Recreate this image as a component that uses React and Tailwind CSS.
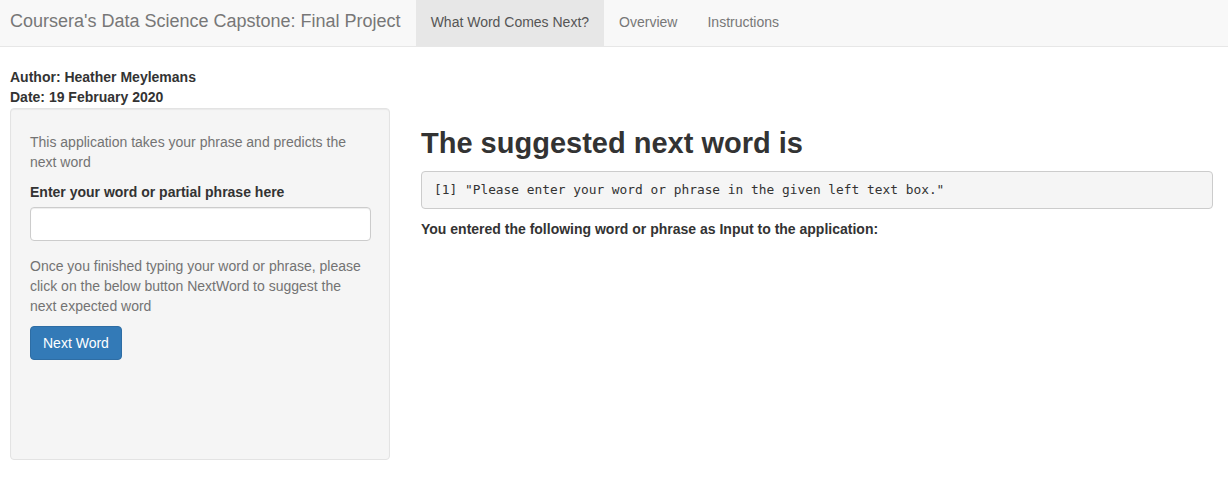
export default function App() {
  const font = { fontFamily: '"Liberation Sans", Arial, sans-serif' };
  return (
    <div className="min-h-[479px] bg-white text-[14px] leading-[20px] text-[#333]" style={font}>
      <nav className="flex h-[47px] items-stretch border-b border-[#e7e7e7] bg-[#f8f8f8]">
        <div className="flex items-center pb-[4px] pl-[10px] pr-[15px] text-[18px] text-[#777]">
          Coursera's Data Science Capstone: Final Project
        </div>
        <div className="flex items-center bg-[#e7e7e7] px-[15px] pb-[3px] text-[#555]">What Word Comes Next?</div>
        <div className="flex items-center px-[15px] pb-[3px] text-[#777]">Overview</div>
        <div className="flex items-center px-[15px] pb-[3px] text-[#777]">Instructions</div>
      </nav>
      <div className="px-[10px] pt-[20px]">
        <div className="font-bold">Author: Heather Meylemans</div>
        <div className="font-bold">Date: 19 February 2020</div>
        <div className="mt-px flex">
          <div className="w-[380px] shrink-0">
            <div className="h-[352px] rounded-[4px] border border-[#e3e3e3] bg-[#f5f5f5] px-[19px] pb-[19px] pt-[23px] shadow-[inset_0_1px_1px_rgba(0,0,0,0.05)]">
              <p className="mb-[10px] text-[#737373]">
                This application takes your phrase and predicts the next word
              </p>
              <label className="mb-[5px] block font-bold">Enter your word or partial phrase here</label>
              <input
                type="text"
                className="mb-[15px] block h-[34px] w-[341px] rounded-[4px] border border-[#ccc] bg-white px-[12px] shadow-[inset_0_1px_1px_rgba(0,0,0,0.075)] outline-none"
              />
              <p className="mb-[10px] text-[#737373]">
                Once you finished typing your word or phrase, please click on the below button NextWord to suggest the next expected word
              </p>
              <button className="h-[34px] rounded-[4px] border border-[#2e6da4] bg-[#337ab7] px-[12px] text-white">
                Next Word
              </button>
            </div>
          </div>
          <div className="ml-[31px] w-[792px]">
            <h2 className="mb-[10px] mt-[18px] text-[29px] font-bold leading-[35px]">The suggested next word is</h2>
            <pre
              className="mb-[10px] rounded-[4px] border border-[#ccc] bg-[#f5f5f5] px-[12px] py-[9px] text-[12.85px] leading-[18px] text-[#333]"
              style={{ fontFamily: '"DejaVu Sans Mono", Menlo, monospace' }}
            >
              [1] "Please enter your word or phrase in the given left text box."
            </pre>
            <div className="font-bold">You entered the following word or phrase as Input to the application:</div>
          </div>
        </div>
      </div>
    </div>
  );
}
